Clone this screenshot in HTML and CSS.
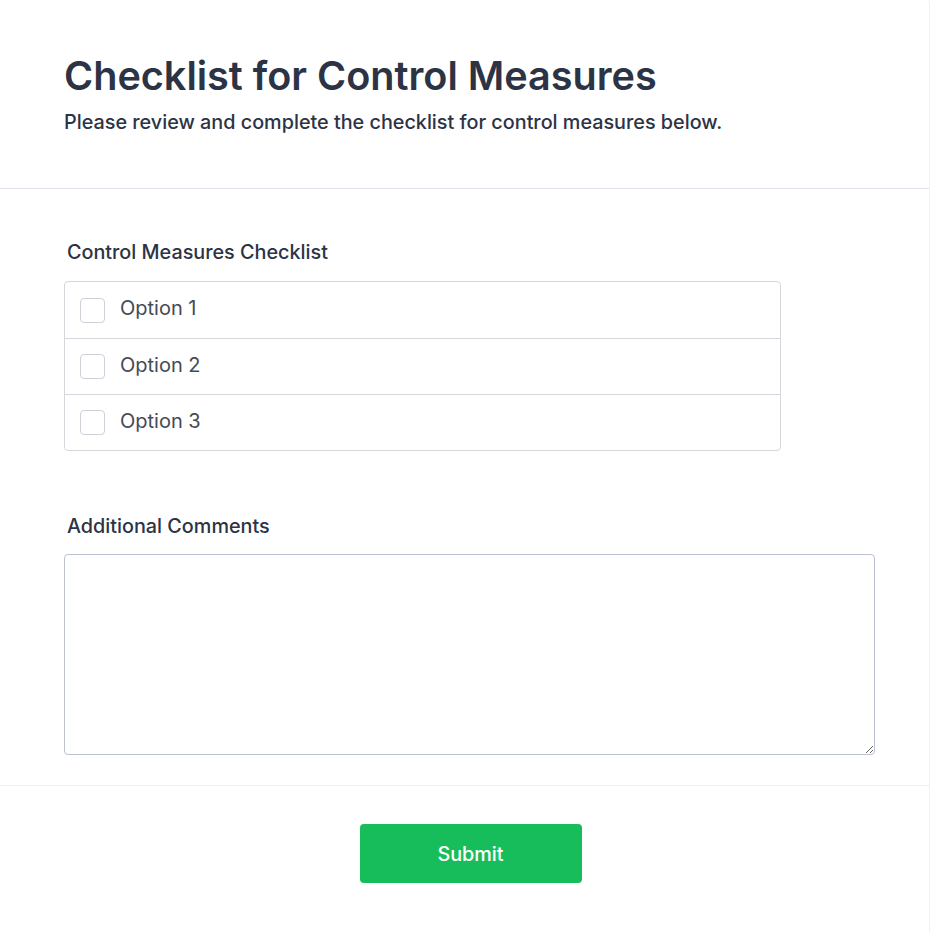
FILE: index.html
```html
<!DOCTYPE html>
<html lang="en">
<head>
<meta charset="utf-8">
<title>Checklist for Control Measures</title>
<link rel="stylesheet" href="styles.css">
</head>
<body>
<div class="card">
  <header class="header">
    <h1 class="title">Checklist for Control Measures</h1>
    <p class="subtitle">Please review and complete the checklist for control measures below.</p>
  </header>
  <main class="body">
    <section class="field">
      <div class="label">Control Measures Checklist</div>
      <div class="options">
        <label class="option"><span class="box"></span><span class="option-text">Option 1</span></label>
        <label class="option"><span class="box"></span><span class="option-text">Option 2</span></label>
        <label class="option"><span class="box"></span><span class="option-text">Option 3</span></label>
      </div>
    </section>
    <section class="field field-comments">
      <div class="label">Additional Comments</div>
      <textarea class="comments"></textarea>
    </section>
  </main>
  <footer class="footer">
    <button class="submit" type="button">Submit</button>
  </footer>
</div>
</body>
</html>
```
FILE: styles.css
```css
* { box-sizing: border-box; }
html, body { margin: 0; padding: 0; background: #ffffff; }
body { font-family: Inter, "Noto Sans", sans-serif; color: #2c3345; }
.card {
  width: 930px;
  min-height: 932px;
  border-right: 1px solid #f1f1f4;
  border-top-right-radius: 4px;
}
.header {
  padding: 52px 64px 0 64px;
  height: 189px;
  border-bottom: 1px solid #e0e1ea;
}
.title {
  margin: 0;
  font-size: 39.6px;
  font-weight: 600;
  line-height: 48px;
  color: #2c3345;
}
.subtitle {
  margin: 10px 0 0 0;
  font-size: 19.8px;
  font-weight: 500;
  line-height: 24px;
  color: #2c3345;
}
.body {
  padding: 51px 54px 0 64px;
  height: 597px;
  border-bottom: 1px solid #eeeef2;
}
.field { display: flex; flex-direction: column; }
.label {
  font-size: 19.8px;
  font-weight: 500;
  line-height: 24px;
  color: #2c3345;
  padding-left: 3px;
  margin-bottom: 17px;
}
.options {
  width: 717px;
  border: 1px solid #d6d6dc;
  border-radius: 4px;
}
.option {
  display: flex;
  align-items: center;
  height: 56px;
  padding-left: 15px;
  border-top: 1px solid #d6d6dc;
}
.option:first-child { border-top: none; }
.box {
  width: 25px;
  height: 25px;
  border: 1px solid #cfd1d8;
  border-radius: 4px;
  background: #fff;
}
.option-text {
  margin-left: 15px;
  font-size: 20px;
  line-height: 24px;
  color: #454a55;
  position: relative;
  top: -2px;
}
.field-comments { margin-top: 63px; }
.field-comments .label { margin-bottom: 16px; }
.comments {
  width: 811px;
  height: 201px;
  border: 1px solid #bcc1cf;
  border-radius: 4px;
  resize: vertical;
  font-family: Inter, sans-serif;
  font-size: 16px;
  display: block;
}
.footer {
  display: flex;
  justify-content: center;
  padding-top: 38px;
}
.submit {
  width: 222px;
  height: 59px;
  background: #18bd5b;
  border: none;
  border-radius: 4px;
  color: #ffffff;
  font-family: Inter, sans-serif;
  font-size: 19.8px;
  font-weight: 500;
  margin-left: 12px;
}
```
